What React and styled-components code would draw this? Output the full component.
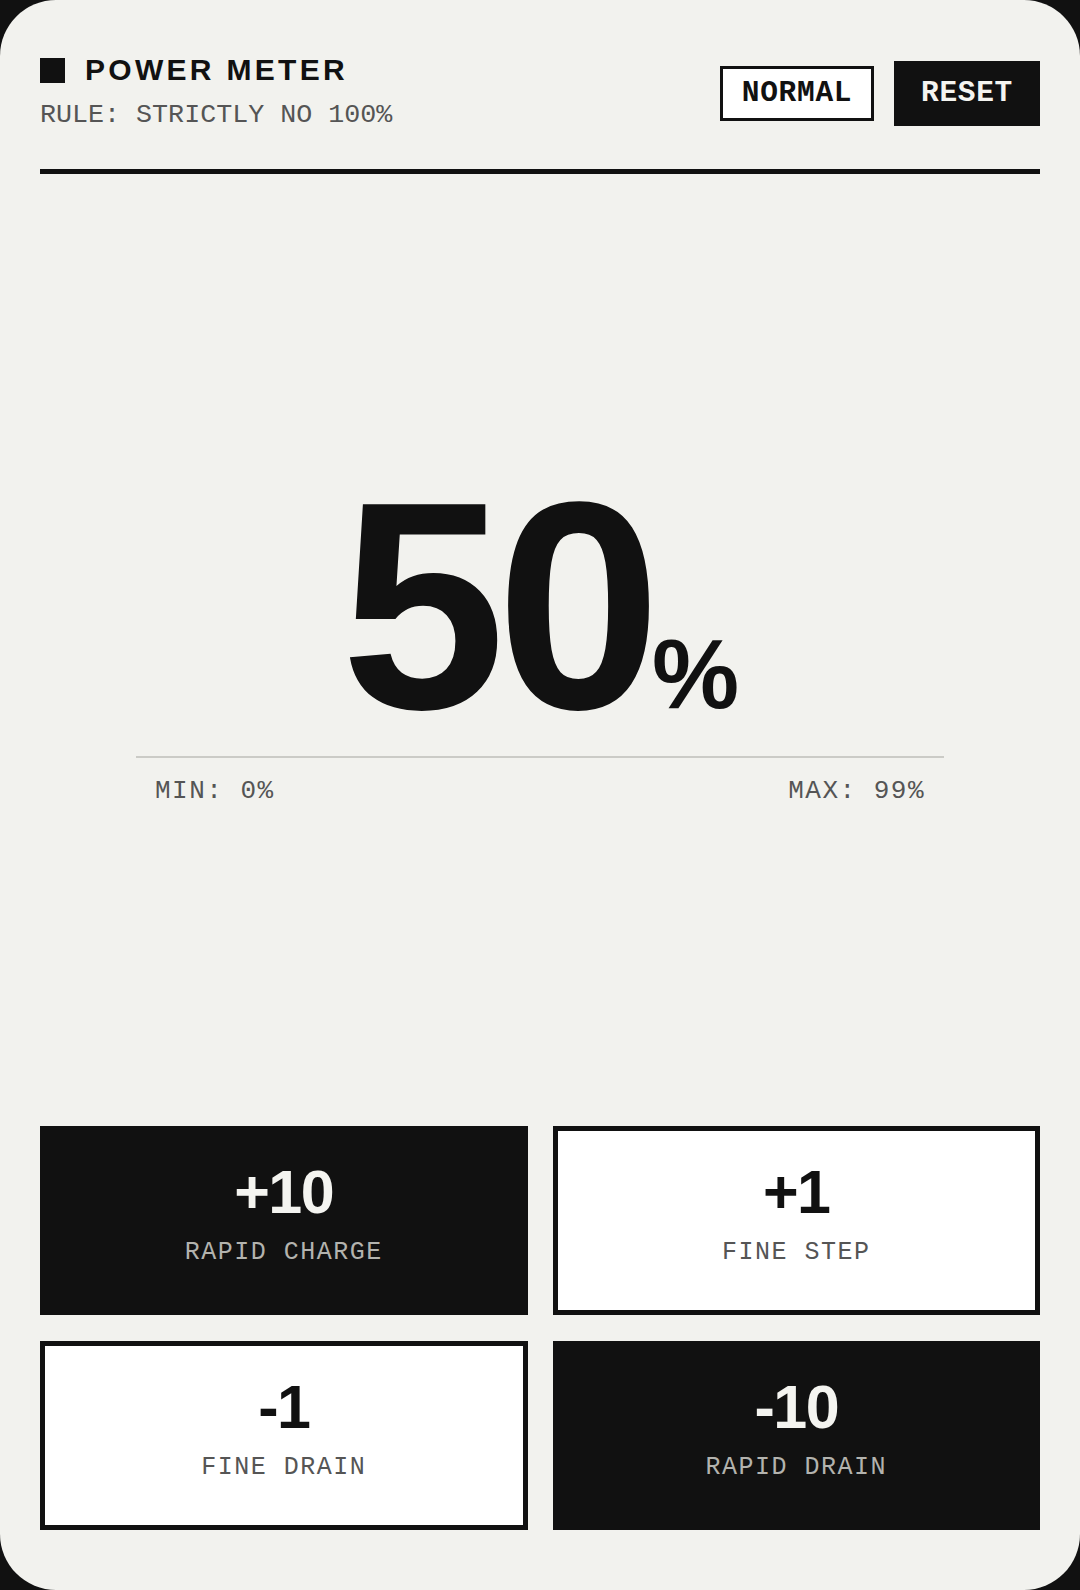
import React from 'react';
import styled, { createGlobalStyle } from 'styled-components';

const GlobalStyle = createGlobalStyle`
  html, body {
    margin: 0;
    padding: 0;
    background: #111111;
  }
  *, *::before, *::after {
    box-sizing: border-box;
  }
  #root {
    min-height: 100vh;
  }
`;

const Card = styled.div`
  min-height: 100vh;
  background: #f2f2ee;
  border-radius: 56px;
  padding: 52px 40px 60px;
  display: flex;
  flex-direction: column;
  font-family: "Liberation Sans", Arial, sans-serif;
  color: #111111;
`;

const Header = styled.header`
  display: flex;
  justify-content: space-between;
  align-items: center;
  padding-bottom: 38px;
  border-bottom: 5px solid #111111;
`;

const TitleBlock = styled.div`
  display: flex;
  flex-direction: column;
`;

const TitleRow = styled.div`
  display: flex;
  align-items: center;
  gap: 20px;
`;

const Square = styled.span`
  flex: none;
  width: 25px;
  height: 25px;
  background: #111111;
`;

const Title = styled.h1`
  margin: 0;
  font-size: 30px;
  line-height: 36px;
  font-weight: 700;
  letter-spacing: 3.3px;
`;

const Subtitle = styled.div`
  margin-top: 10.5px;
  font-family: "Liberation Mono", "Courier New", monospace;
  font-size: 26.7px;
  line-height: 1.2;
  color: #555555;
`;

const Actions = styled.div`
  display: flex;
  align-items: center;
  gap: 20px;
  margin-top: 4px;
`;

const HeaderButton = styled.button`
  display: flex;
  align-items: center;
  justify-content: center;
  padding: 0;
  border-radius: 0;
  cursor: pointer;
  font-family: "Liberation Mono", "Courier New", monospace;
  font-weight: 700;
  font-size: 29.5px;
  line-height: 1;
  letter-spacing: 0.7px;
  ${(p) =>
    p.$solid
      ? `
    width: 146px;
    height: 65px;
    background: #111111;
    color: #f4f4f0;
    border: none;
  `
      : `
    width: 154px;
    height: 55px;
    background: #ffffff;
    color: #111111;
    border: 3px solid #111111;
  `}
`;

const Display = styled.main`
  flex: 1;
  display: flex;
  flex-direction: column;
  justify-content: center;
  padding-bottom: 34px;
`;

const Value = styled.div`
  text-align: center;
  font-size: 296px;
  line-height: 1;
  font-weight: 700;
  letter-spacing: -9px;
  color: #111111;
`;

const Unit = styled.span`
  font-size: 98px;
  letter-spacing: 0;
`;

const Scale = styled.div`
  margin: 2px 96px 0;
  border-top: 2px solid #cbcbc6;
  padding: 17.5px 19px 0;
  display: flex;
  justify-content: space-between;
  font-family: "Liberation Mono", "Courier New", monospace;
  font-size: 26px;
  line-height: 1.2;
  letter-spacing: 1.5px;
  color: #555555;
`;

const Controls = styled.div`
  display: grid;
  grid-template-columns: 1fr 1fr;
  gap: 26px 25px;
`;

const ControlButton = styled.button`
  height: 189px;
  border: 5px solid #111111;
  border-radius: 0;
  background: ${(p) => (p.$dark ? '#111111' : '#ffffff')};
  display: flex;
  flex-direction: column;
  align-items: center;
  justify-content: center;
  padding: 0 0 11px;
  cursor: pointer;
`;

const Amount = styled.span`
  font-family: "Liberation Sans", Arial, sans-serif;
  font-weight: 700;
  font-size: 61px;
  line-height: 1;
  letter-spacing: -1.5px;
  color: ${(p) => (p.$dark ? '#f4f4f0' : '#111111')};
`;

const Label = styled.span`
  margin-top: 15px;
  font-family: "Liberation Mono", "Courier New", monospace;
  font-size: 25px;
  line-height: 1.2;
  letter-spacing: 1.5px;
  color: ${(p) => (p.$dark ? '#b3b3ae' : '#555555')};
`;

const controls = [
  { amount: '+10', label: 'RAPID CHARGE', dark: true },
  { amount: '+1', label: 'FINE STEP', dark: false },
  { amount: '-1', label: 'FINE DRAIN', dark: false },
  { amount: '-10', label: 'RAPID DRAIN', dark: true },
];

export default function App() {
  return (
    <>
      <GlobalStyle />
      <Card>
        <Header>
          <TitleBlock>
            <TitleRow>
              <Square />
              <Title>POWER METER</Title>
            </TitleRow>
            <Subtitle>RULE: STRICTLY NO 100%</Subtitle>
          </TitleBlock>
          <Actions>
            <HeaderButton>NORMAL</HeaderButton>
            <HeaderButton $solid>RESET</HeaderButton>
          </Actions>
        </Header>
        <Display>
          <Value>
            50<Unit>%</Unit>
          </Value>
          <Scale>
            <span>MIN: 0%</span>
            <span>MAX: 99%</span>
          </Scale>
        </Display>
        <Controls>
          {controls.map((c) => (
            <ControlButton key={c.label} $dark={c.dark}>
              <Amount $dark={c.dark}>{c.amount}</Amount>
              <Label $dark={c.dark}>{c.label}</Label>
            </ControlButton>
          ))}
        </Controls>
      </Card>
    </>
  );
}
